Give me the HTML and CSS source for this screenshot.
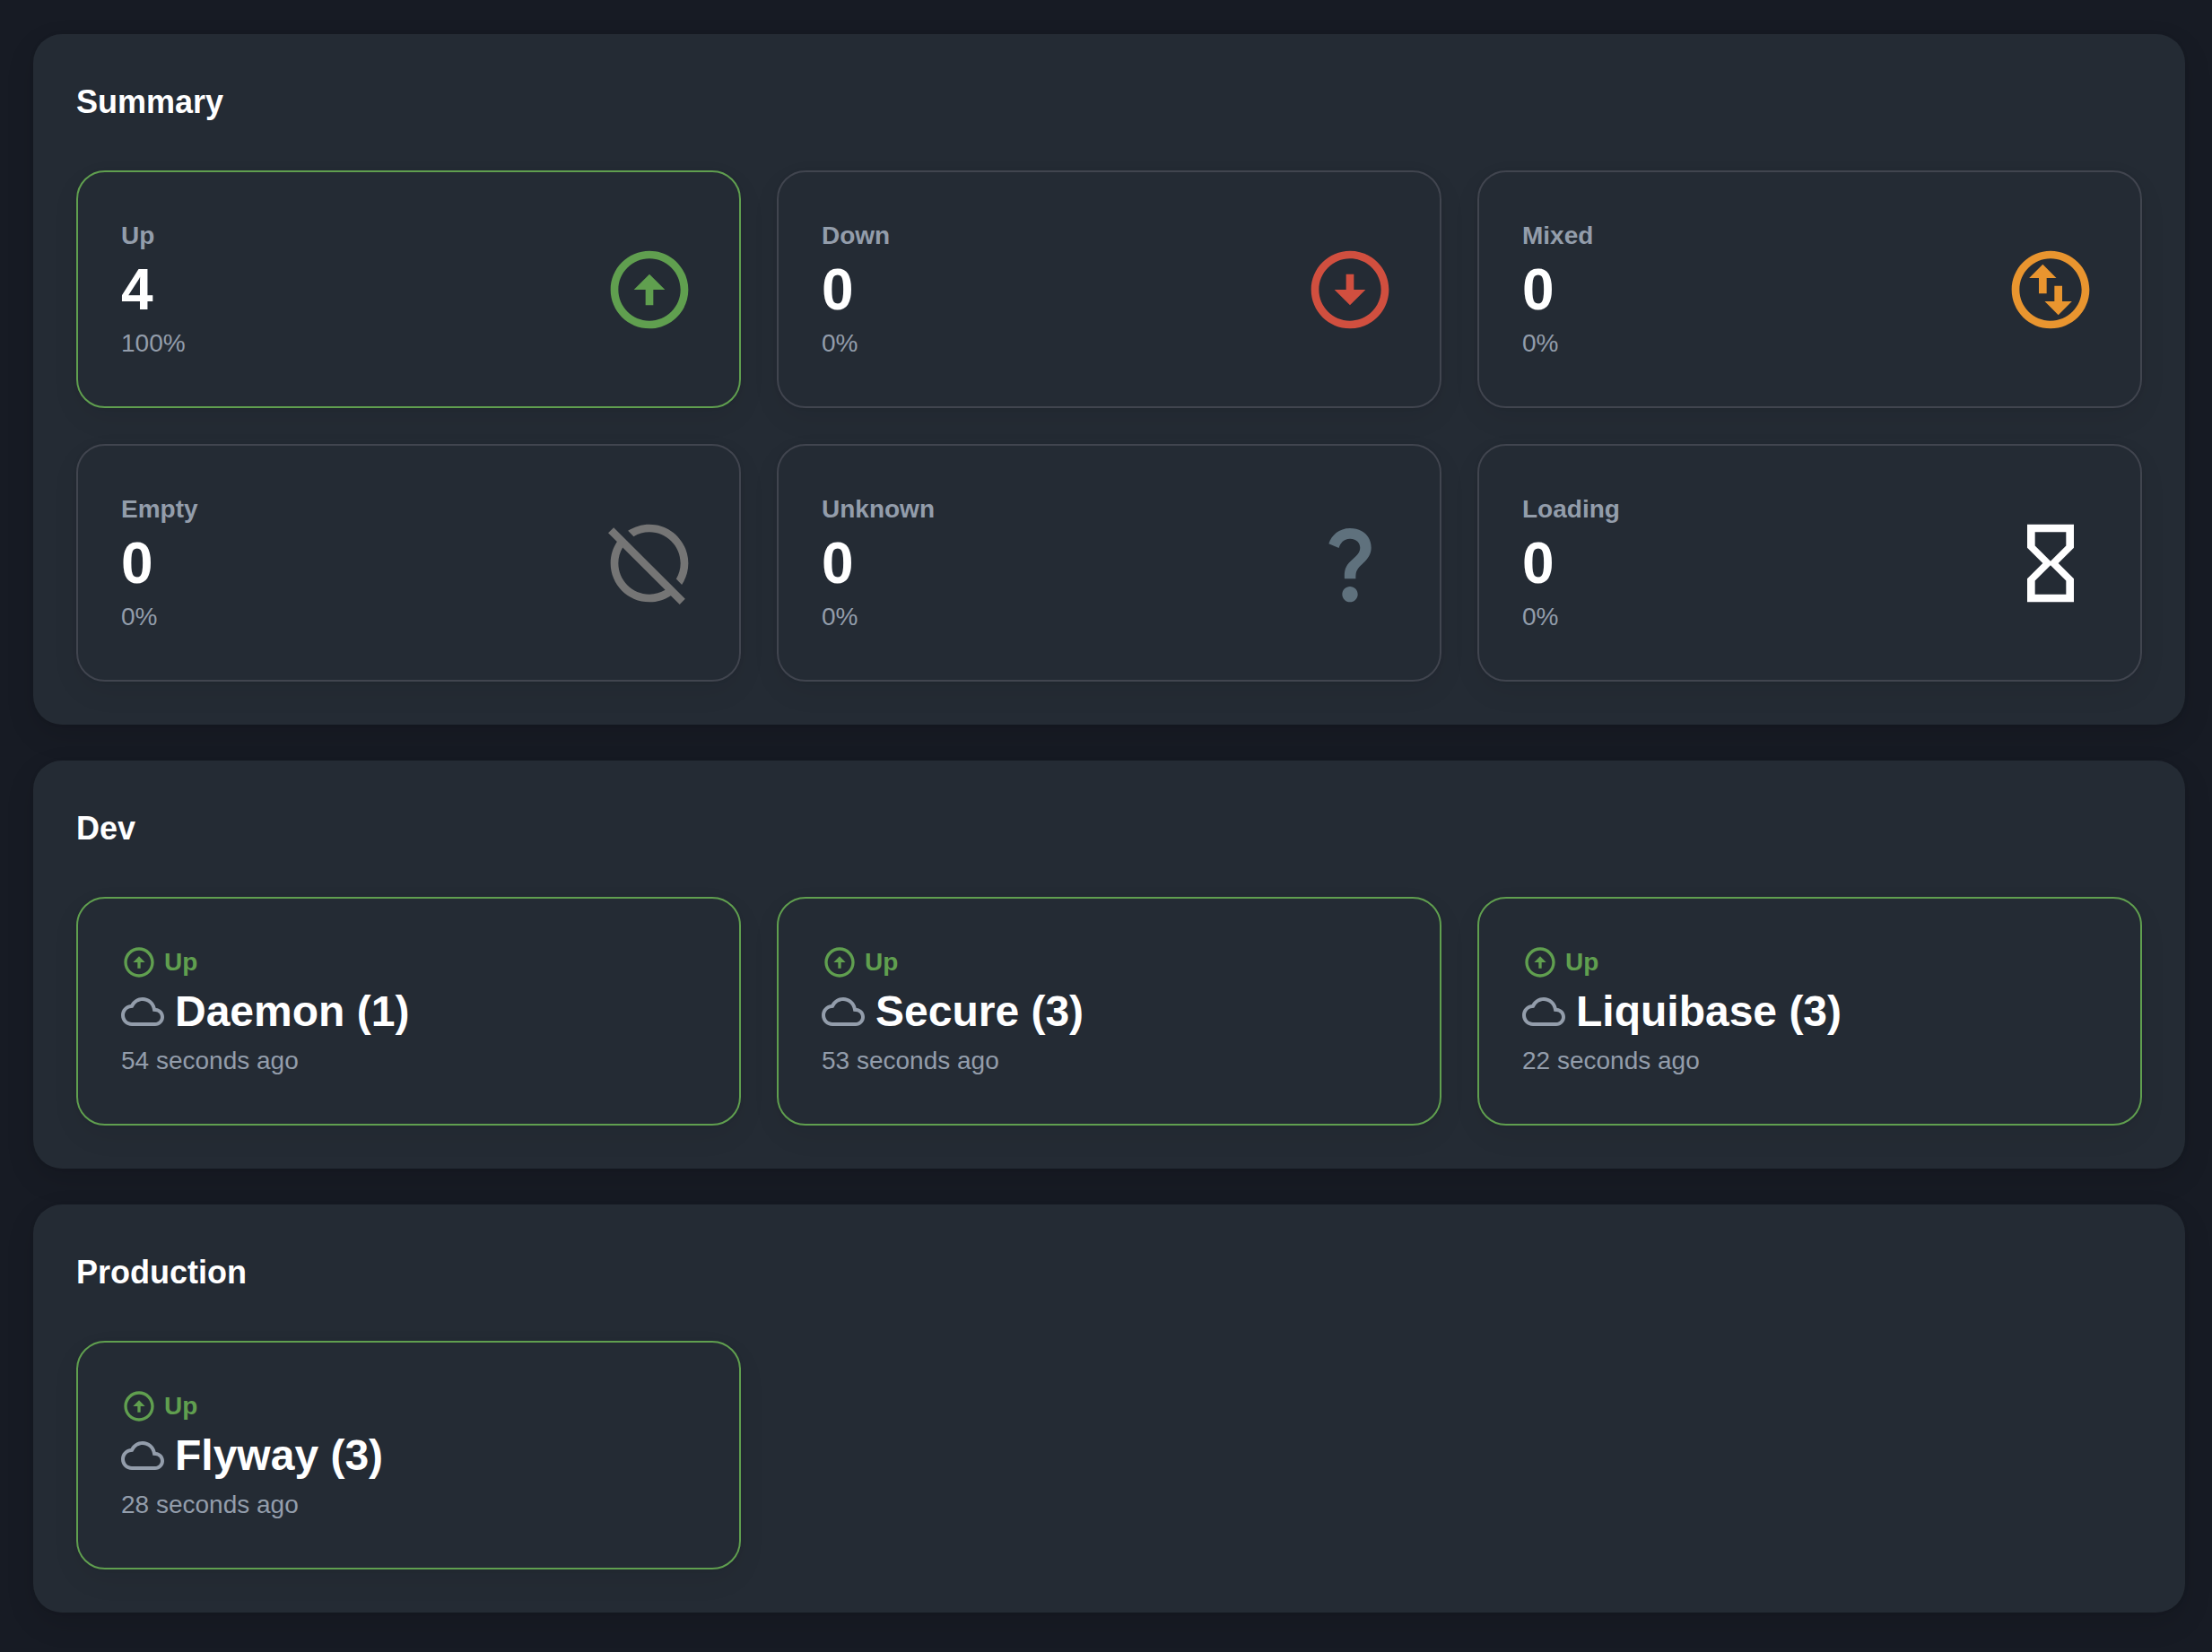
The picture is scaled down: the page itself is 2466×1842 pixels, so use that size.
FILE: index.html
```html
<!DOCTYPE html>
<html lang="en">
<head>
<meta charset="utf-8">
<meta name="viewport" content="width=device-width, initial-scale=1">
<title>Status</title>
<link rel="stylesheet" href="styles.css">
</head>
<body>
<svg class="sprite" aria-hidden="true">
  <symbol id="icon-up" viewBox="0 0 24 24"><path d="M12 20c-4.410 0-8-3.590-8-8s3.590-8 8-8 8 3.590 8 8-3.590 8-8 8m0 2c5.520 0 10-4.480 10-10S17.520 2 12 2 2 6.480 2 12s4.480 10 10 10zM11 12v4h2v-4h3l-4-4-4 4h3z"/></symbol>
  <symbol id="icon-down" viewBox="0 0 24 24"><path d="M12 4c4.410 0 8 3.590 8 8s-3.590 8-8 8-8-3.590-8-8 3.590-8 8-8m0-2C6.480 2 2 6.480 2 12s4.480 10 10 10 10-4.480 10-10S17.520 2 12 2zM13 12V8h-2v4H8l4 4 4-4h-3z"/></symbol>
  <symbol id="icon-mixed" viewBox="0 0 24 24"><path d="M12 4c4.410 0 8 3.590 8 8s-3.590 8-8 8-8-3.590-8-8 3.590-8 8-8m0-2C6.480 2 2 6.480 2 12s4.480 10 10 10 10-4.480 10-10S17.520 2 12 2zM6.500 9 10 5.500 13.500 9H11v4H9V9H6.500zM17.500 15 14 18.500 10.500 15H13v-4h2v4h2.500z"/></symbol>
  <symbol id="icon-empty" viewBox="0 0 24 24"><path d="M2.810 2.810 1.390 4.220l2.270 2.270C2.610 8.070 2 9.960 2 12c0 5.520 4.480 10 10 10 2.040 0 3.930-.61 5.510-1.660l2.270 2.270 1.410-1.410L2.810 2.810zM12 20c-4.410 0-8-3.590-8-8 0-1.480.41-2.860 1.120-4.060l10.940 10.940C14.860 19.590 13.480 20 12 20zM7.940 5.120 6.490 3.660C8.070 2.610 9.960 2 12 2c5.520 0 10 4.480 10 10 0 2.040-.61 3.930-1.660 5.510l-1.460-1.460C19.590 14.860 20 13.480 20 12c0-4.410-3.590-8-8-8-1.480 0-2.860.41-4.060 1.120z"/></symbol>
  <symbol id="icon-unknown" viewBox="0 0 24 24"><path d="M11.070 12.850c.77-1.390 2.250-2.210 3.110-3.440.91-1.290.4-3.700-2.180-3.700-1.690 0-2.520 1.280-2.870 2.340L6.540 6.960C7.250 4.830 9.180 3 11.990 3c2.350 0 3.960 1.070 4.780 2.410.7 1.150 1.110 3.300.03 4.900-1.200 1.770-2.350 2.310-2.970 3.450-.25.46-.35.76-.35 2.240h-2.890c-.01-.78-.13-2.050.48-3.150zM14 20c0 1.100-.9 2-2 2s-2-.9-2-2 .9-2 2-2 2 .9 2 2z"/></symbol>
  <symbol id="icon-loading" viewBox="0 0 24 24"><path d="M6 2v6l4 4-4 4v6h12v-6l-4-4 4-4V2H6zm10 14.500V20H8v-3.500l4-4 4 4zm-4-5-4-4V4h8v3.500l-4 4z"/></symbol>
  <symbol id="icon-cloud" viewBox="0 0 24 24"><path d="M12 6c2.620 0 4.880 1.860 5.390 4.430l.3 1.500 1.530.11c1.560.1 2.780 1.410 2.780 2.960 0 1.650-1.350 3-3 3H6c-2.210 0-4-1.790-4-4 0-2.050 1.530-3.760 3.560-3.970l1.070-.11.5-.95C8.080 7.140 9.940 6 12 6m0-2C9.110 4 6.600 5.640 5.350 8.040 2.340 8.360 0 10.910 0 14c0 3.310 2.690 6 6 6h13c2.760 0 5-2.240 5-5 0-2.640-2.050-4.780-4.650-4.960C18.670 6.590 15.640 4 12 4z"/></symbol>
</svg>
<main class="dashboard">
  <section class="panel" aria-labelledby="summary-title">
    <h2 class="panel-title" id="summary-title">Summary</h2>
    <div class="card-grid">
      <article class="card card-active">
        <div class="card-text">
          <h3 class="label">Up</h3>
          <p class="count">4</p>
          <p class="caption">100%</p>
        </div>
        <svg class="status-icon is-up" aria-hidden="true"><use href="#icon-up"/></svg>
      </article>
      <article class="card">
        <div class="card-text">
          <h3 class="label">Down</h3>
          <p class="count">0</p>
          <p class="caption">0%</p>
        </div>
        <svg class="status-icon is-down" aria-hidden="true"><use href="#icon-down"/></svg>
      </article>
      <article class="card">
        <div class="card-text">
          <h3 class="label">Mixed</h3>
          <p class="count">0</p>
          <p class="caption">0%</p>
        </div>
        <svg class="status-icon is-mixed" aria-hidden="true"><use href="#icon-mixed"/></svg>
      </article>
      <article class="card">
        <div class="card-text">
          <h3 class="label">Empty</h3>
          <p class="count">0</p>
          <p class="caption">0%</p>
        </div>
        <svg class="status-icon is-empty" aria-hidden="true"><use href="#icon-empty"/></svg>
      </article>
      <article class="card">
        <div class="card-text">
          <h3 class="label">Unknown</h3>
          <p class="count">0</p>
          <p class="caption">0%</p>
        </div>
        <svg class="status-icon is-unknown" aria-hidden="true"><use href="#icon-unknown"/></svg>
      </article>
      <article class="card">
        <div class="card-text">
          <h3 class="label">Loading</h3>
          <p class="count">0</p>
          <p class="caption">0%</p>
        </div>
        <svg class="status-icon is-loading" aria-hidden="true"><use href="#icon-loading"/></svg>
      </article>
    </div>
  </section>

  <section class="panel" aria-labelledby="dev-title">
    <h2 class="panel-title" id="dev-title">Dev</h2>
    <div class="card-grid">
      <article class="card card-active">
        <div class="card-text">
          <p class="label state is-up"><svg class="state-icon" aria-hidden="true"><use href="#icon-up"/></svg>Up</p>
          <h3 class="service"><svg class="cloud-icon" aria-hidden="true"><use href="#icon-cloud"/></svg>Daemon (1)</h3>
          <p class="caption">54 seconds ago</p>
        </div>
      </article>
      <article class="card card-active">
        <div class="card-text">
          <p class="label state is-up"><svg class="state-icon" aria-hidden="true"><use href="#icon-up"/></svg>Up</p>
          <h3 class="service"><svg class="cloud-icon" aria-hidden="true"><use href="#icon-cloud"/></svg>Secure (3)</h3>
          <p class="caption">53 seconds ago</p>
        </div>
      </article>
      <article class="card card-active">
        <div class="card-text">
          <p class="label state is-up"><svg class="state-icon" aria-hidden="true"><use href="#icon-up"/></svg>Up</p>
          <h3 class="service"><svg class="cloud-icon" aria-hidden="true"><use href="#icon-cloud"/></svg>Liquibase (3)</h3>
          <p class="caption">22 seconds ago</p>
        </div>
      </article>
    </div>
  </section>

  <section class="panel" aria-labelledby="production-title">
    <h2 class="panel-title" id="production-title">Production</h2>
    <div class="card-grid">
      <article class="card card-active">
        <div class="card-text">
          <p class="label state is-up"><svg class="state-icon" aria-hidden="true"><use href="#icon-up"/></svg>Up</p>
          <h3 class="service"><svg class="cloud-icon" aria-hidden="true"><use href="#icon-cloud"/></svg>Flyway (3)</h3>
          <p class="caption">28 seconds ago</p>
        </div>
      </article>
    </div>
  </section>
</main>
</body>
</html>
```
FILE: styles.css
```css
:root {
  --page: #171b24;
  --surface: #242b34;
  --border: #41454f;
  --text: #ffffff;
  --muted: #939dab;
  --up: #609f4f;
  --down: #d14f3f;
  --mixed: #e9952f;
  --empty: #757575;
  --unknown: #5f717d;
}

* {
  box-sizing: border-box;
}

body {
  margin: 0;
  background: var(--page);
  color: var(--text);
  font-family: "Liberation Sans", Arial, Helvetica, sans-serif;
  font-size: 28px;
  line-height: 46px;
}

h2,
h3,
p {
  margin: 0;
}

svg {
  flex: none;
  fill: currentColor;
}

.sprite {
  display: none;
}

.dashboard {
  display: flex;
  flex-direction: column;
  gap: 40px;
  padding: 38px 30px 44px 37px;
}

.panel {
  padding: 48px;
  border-radius: 32px;
  background: var(--surface);
  box-shadow: 0 0 4px rgba(0, 0, 0, 0.08), 0 12px 32px rgba(0, 0, 0, 0.12);
}

.panel-title {
  margin-bottom: 48px;
  font-size: 36px;
  line-height: 56px;
}

.card-grid {
  display: grid;
  grid-template-columns: repeat(3, minmax(0, 1fr));
  gap: 40px;
}

.card {
  display: flex;
  align-items: center;
  justify-content: space-between;
  padding: 48px 48px 47px;
  border: 2px solid var(--border);
  border-radius: 32px;
  background: var(--surface);
  box-shadow: 0 0 4px rgba(0, 0, 0, 0.08), 0 12px 32px rgba(0, 0, 0, 0.06);
}

.card-active {
  border-color: var(--up);
}

.label {
  color: var(--muted);
  font-size: 28px;
  font-weight: 700;
}

.count {
  font-size: 64px;
  font-weight: 700;
  line-height: 74px;
}

.caption {
  color: var(--muted);
}

.state {
  display: flex;
  align-items: center;
  gap: 8px;
}

.service {
  display: flex;
  align-items: center;
  gap: 12px;
  font-size: 48px;
  line-height: 64px;
}

.status-icon {
  width: 104px;
  height: 104px;
}

.state-icon {
  width: 40px;
  height: 40px;
}

.cloud-icon {
  width: 48px;
  height: 48px;
  color: var(--muted);
}

.is-up {
  color: var(--up);
}

.is-down {
  color: var(--down);
}

.is-mixed {
  color: var(--mixed);
}

.is-empty {
  color: var(--empty);
}

.is-unknown {
  color: var(--unknown);
}

.is-loading {
  color: var(--text);
}

@media (max-width: 1400px) {
  .card-grid {
    grid-template-columns: repeat(auto-fit, minmax(min(100%, 440px), 1fr));
  }
}
```
